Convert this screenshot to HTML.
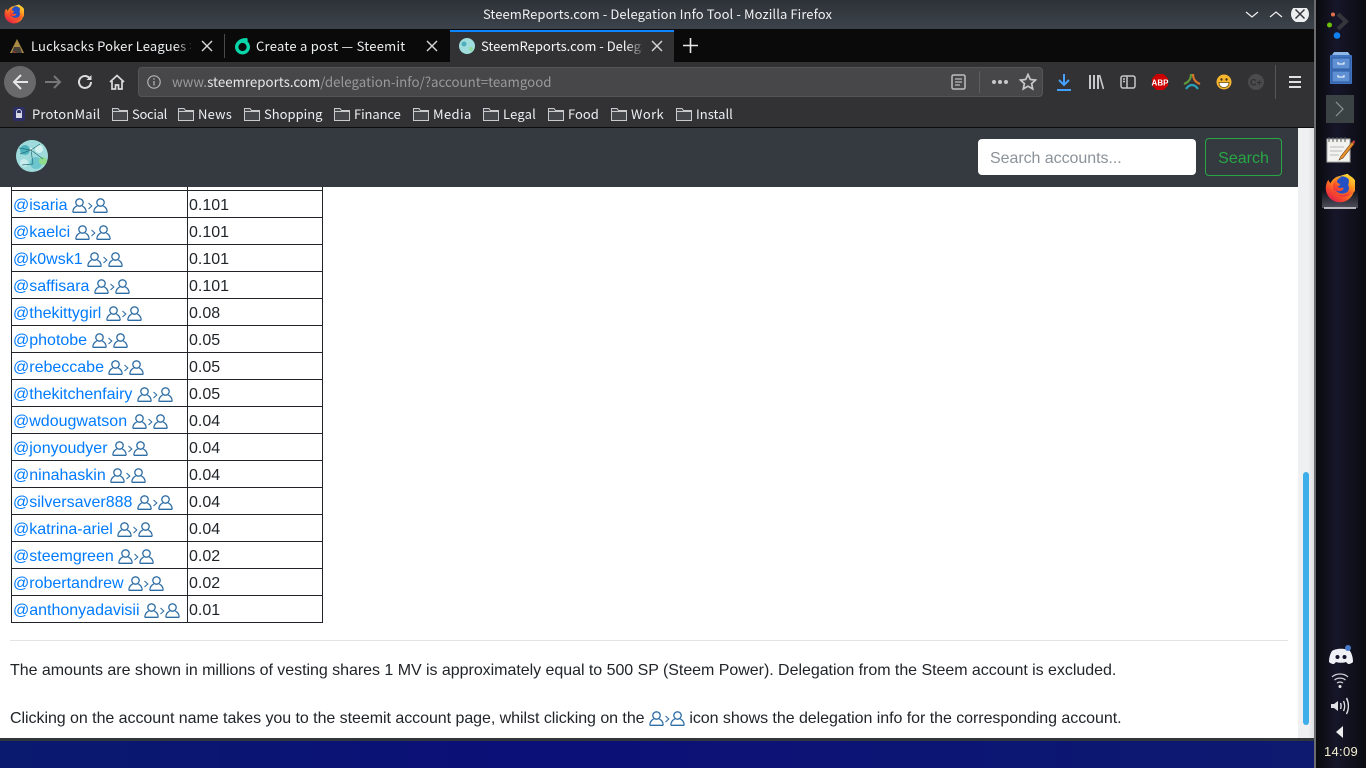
<!DOCTYPE html>
<html><head><meta charset="utf-8"><title>SteemReports.com - Delegation Info Tool</title>
<style>
html,body{margin:0;padding:0;width:1366px;height:768px;overflow:hidden;background:#0b1272;font-family:"Liberation Sans",sans-serif;}
.a{position:absolute;white-space:nowrap;}
.ui{font-family:"Noto Sans CJK JP","Liberation Sans",sans-serif;font-size:13px;color:#eceff1;line-height:18px;}
svg{display:block;}
table{position:absolute;left:11px;top:163px;border-collapse:collapse;width:312px;table-layout:fixed;font-size:16px;color:#212529;}
td{border:1px solid #212529;height:22px;padding:4px 1px 0;line-height:22px;white-space:nowrap;overflow:hidden;}
td a{color:#007bff;text-decoration:none;}
td svg,p svg{display:inline-block;vertical-align:-3px;}
.fade{background:linear-gradient(90deg,rgba(10,10,10,0),#0a0a0a);}
</style></head><body>
<svg width="0" height="0" style="position:absolute"><defs>
<linearGradient id="fg" x1="0.85" y1="0.05" x2="0.2" y2="0.95"><stop offset="0" stop-color="#ffe03a"/><stop offset=".4" stop-color="#ff9a1f"/><stop offset=".75" stop-color="#f6472c"/><stop offset="1" stop-color="#e0204f"/></linearGradient>
<symbol id="pp" viewBox="0 0 36 15"><g fill="none" stroke="#2f6ea5" stroke-width="1.3"><circle cx="7.5" cy="4.5" r="3.7"/><path d="M.8 14.3c0-3.6 2.2-5.6 3.9-6.2M14.2 14.3c0-3.6-2.2-5.6-3.9-6.2M.8 14.3h13.4"/><path d="M16.5 5l3.3 3-3.3 3" stroke-width="1.1"/><circle cx="28.5" cy="4.5" r="3.7"/><path d="M21.8 14.3c0-3.6 2.2-5.6 3.9-6.2M35.200 14.300c0-3.600-2.200-5.600-3.900-6.200M21.800 14.300h13.400"/></g></symbol>
<symbol id="fd" viewBox="0 0 16 14"><path d="M.5 13.500V1.500h5.500l1.500 2h8v10z" fill="#45474a" stroke="#c8cacb"/><path d="M.5 4.500h15" stroke="#c8cacb"/></symbol>
<symbol id="ff" viewBox="0 0 40 40"><path d="M30 1c5 4 9 11 9 19 0 10.500-8.500 19-19 19S1 30.500 1 20c0-4 1.200-8 3.500-11 .5 2 1.500 3.500 3 4.500C9 10 12 7 16 5z" fill="url(#fg)"/><circle cx="23" cy="16" r="11.500" fill="#2450c4"/><path d="M29 2c3 4 3.500 9 2 14 2.500 5-.5 11-6 13-7 2-13-2-14-8 3 3.500 8 4.500 12 2 2-1.500 2-3 1-3.500-3 1-6 .5-7.500-1.500 2.500-.5 4-2 3.500-3.500-2-.5-4-1.500-4-3 0-3 3.500-5 6-6.500-3 .2-7 1.200-9 4.500-2 2.800-3 8-1 13 2 5 7 9 14 9 9 0 16-7 16-15 0-6-4-11-13-15z" fill="url(#fg)"/></symbol>
</defs></svg>

<!-- title bar -->
<div class="a" style="left:0;top:0;width:1315px;height:29px;background:linear-gradient(#2d3237,#3d434b)"></div>
<svg class="a" style="left:4px;top:4px" width="20" height="20"><use href="#ff"/></svg>
<div class="a ui" style="left:0;width:1315px;top:5px;text-align:center;color:#eff0f1;letter-spacing:.09px">SteemReports.com - Delegation Info Tool - Mozilla Firefox</div>
<svg class="a" style="left:1244px;top:8px" width="68" height="14" fill="none" stroke="#eff0f1" stroke-width="1.200"><path d="M2 4l6 5 6-5M26 9l6-5 6 5"/><circle cx="56" cy="6" r="9" fill="#eceef0" stroke="none"/><path d="M51.500 1.500l9 9m0-9l-9 9" stroke="#31363b" stroke-width="1.500"/></svg>

<!-- tab bar -->
<div class="a" style="left:0;top:29px;width:1315px;height:33px;background:#0a0a0a"></div>
<div class="a" style="left:450px;top:30px;width:224px;height:32px;background:#323234;border-top:2px solid #0a84ff;box-sizing:border-box"></div>
<div class="a" style="left:224px;top:34px;width:1px;height:24px;background:#4a4a4c"></div>
<svg class="a" style="left:9px;top:38px" width="16" height="16"><path d="M8 1L1 15h14z" fill="#a88a45"/><path d="M5 9h6l2 6H3z" fill="#45403a"/><path d="M4 13l1 2h3z" fill="#a83a30"/></svg>
<div class="a ui" style="left:31px;top:37px;width:160px;overflow:hidden;letter-spacing:.13px">Lucksacks Poker Leagues &gt;</div>
<div class="a fade" style="left:175px;top:36px;width:20px;height:20px"></div>
<svg class="a" style="left:201px;top:40px" width="12" height="12" stroke="#d8d8d8" stroke-width="1.400"><path d="M1 1l10 10m0-10L1 11"/></svg>
<svg class="a" style="left:234px;top:37px" width="17" height="18" fill="none"><circle cx="8.500" cy="10" r="5.800" stroke="#06d6a9" stroke-width="3.400"/><path d="M2 8C3 3 7 1 13 1c1 1.500 1 3 0 4-3-.5-6 0-8 3z" fill="#06d6a9"/></svg>
<div class="a ui" style="left:256px;top:37px;letter-spacing:.26px">Create a post — Steemit</div>
<svg class="a" style="left:426px;top:40px" width="12" height="12" stroke="#d8d8d8" stroke-width="1.400"><path d="M1 1l10 10m0-10L1 11"/></svg>
<svg class="a" style="left:459px;top:38px" width="16" height="16"><circle cx="8" cy="8" r="8" fill="#9fdcdc"/><circle cx="5" cy="6" r="2.500" fill="#4faebc"/><circle cx="12" cy="11" r="2" fill="#8fdc9c"/></svg>
<div class="a ui" style="left:481px;top:37px;width:161px;overflow:hidden;color:#f5f5f5">SteemReports.com - Delegation</div>
<div class="a" style="left:626px;top:36px;width:20px;height:20px;background:linear-gradient(90deg,rgba(50,50,52,0),#323234)"></div>
<svg class="a" style="left:651px;top:40px" width="12" height="12" stroke="#d8d8d8" stroke-width="1.400"><path d="M1 1l10 10m0-10L1 11"/></svg>
<svg class="a" style="left:683px;top:38px" width="15" height="15" stroke="#e8e8e8" stroke-width="1.600"><path d="M7.500 0v15M0 7.500h15"/></svg>

<!-- nav bar -->
<div class="a" style="left:0;top:62px;width:1315px;height:65px;background:#323234"></div>
<div class="a" style="left:0;top:127px;width:1315px;height:1px;background:#0c0c0d"></div>
<div class="a" style="left:4px;top:66px;width:32px;height:32px;border-radius:50%;background:#69696b"></div>
<svg class="a" style="left:12px;top:73px" width="18" height="18" fill="none" stroke="#e6e6e6" stroke-width="2"><path d="M2 9h14M9 2L2 9l7 7"/></svg>
<svg class="a" style="left:44px;top:74px" width="18" height="16" fill="none" stroke="#77777a" stroke-width="2"><path d="M1 8h15M10 2l6 6-6 6"/></svg>
<svg class="a" style="left:77px;top:74px" width="16" height="16" fill="none" stroke="#dcdcdc" stroke-width="2"><path d="M14 8a6 6 0 1 1-2-4.500L14 5"/><path d="M14.500 1v5h-5" fill="#dcdcdc" stroke="none"/></svg>
<svg class="a" style="left:109px;top:74px" width="16" height="16" fill="none" stroke="#dcdcdc" stroke-width="1.700"><path d="M1 8l7-6.500L15 8M3 7v8h3.500v-4h3v4H13V7"/></svg>
<div class="a" style="left:138px;top:67px;width:905px;height:30px;box-sizing:border-box;background:#474749;border:1px solid #565658;border-radius:4px"></div>
<svg class="a" style="left:147px;top:75px" width="14" height="14" fill="none" stroke="#b4b4b6" stroke-width="1.200"><circle cx="7" cy="7" r="6.200"/><path d="M7 6v4.500M7 3.300v1.400"/></svg>
<div class="a ui" style="left:172px;top:73px;color:#9a9a9c;font-size:13.300px"><span>www.</span><span style="color:#e8e8e8">steemreports.com</span>/delegation-info/?account=teamgood</div>
<svg class="a" style="left:951px;top:74px" width="15" height="16" fill="none" stroke="#bdbdbf" stroke-width="1.500"><rect x="1" y="1" width="13" height="14" rx="1.500"/><path d="M4 5h7M4 8h7M4 11h5" stroke-width="1.200"/></svg>
<div class="a" style="left:979px;top:71px;width:1px;height:22px;background:#5e5e60"></div>
<svg class="a" style="left:991px;top:79px" width="18" height="6" fill="#c8c8ca"><circle cx="3" cy="3" r="2"/><circle cx="9" cy="3" r="2"/><circle cx="15" cy="3" r="2"/></svg>
<svg class="a" style="left:1019px;top:73px" width="18" height="18" fill="none" stroke="#c8c8ca" stroke-width="1.700"><path d="M9 1.500l2.300 5 5.200.6-3.900 3.500 1.100 5.300L9 13.200l-4.700 2.700 1.100-5.300L1.500 7.100l5.200-.6z"/></svg>
<svg class="a" style="left:1057px;top:73px" width="14" height="18" fill="none" stroke="#45a1ff" stroke-width="2"><path d="M7 1v11M2 7l5 5 5-5M0 17h14"/></svg>
<svg class="a" style="left:1088px;top:74px" width="16" height="16" fill="none" stroke="#c8c8ca" stroke-width="2"><path d="M2 1v14M6 1v14M10 1v14" /><path d="M11.500 1l4 14" stroke-width="1.600"/></svg>
<svg class="a" style="left:1120px;top:75px" width="16" height="14" fill="none" stroke="#c8c8ca" stroke-width="1.500"><rect x="1" y="1" width="14" height="12" rx="2"/><path d="M7 1v12M3 4h2M3 6.500h2"/></svg>
<svg class="a" style="left:1151px;top:73px" width="18" height="18"><path d="M5.500 1h7L17 5.500v7L12.500 17h-7L1 12.500v-7z" fill="#c00"/><text x="9" y="12.300" text-anchor="middle" font-family="Liberation Sans" font-weight="bold" font-size="8" fill="#fff">ABP</text></svg>
<svg class="a" style="left:1183px;top:73px" width="18" height="18" fill="none" stroke-width="2.200"><path d="M8 1C8 6 6 9 1 11" stroke="#5f9b3a"/><path d="M10 1c0 5 2 8 7 10" stroke="#d8732a"/><path d="M3 16c2-3 4-4 6-4s4 1 6 4" stroke="#2aa0b8"/></svg>
<svg class="a" style="left:1216px;top:74px" width="16" height="16"><circle cx="8" cy="8" r="7.500" fill="#f5b62e"/><circle cx="5.500" cy="5.500" r="1.200" fill="#4a3410"/><circle cx="10.500" cy="5.500" r="1.200" fill="#4a3410"/><path d="M3 8.500h10c0 3-2 5-5 5s-5-2-5-5z" fill="#fff" stroke="#6b4a14" stroke-width=".8"/></svg>
<svg class="a" style="left:1248px;top:74px" width="16" height="16"><circle cx="8" cy="8" r="8" fill="#4b4b4d"/><text x="8" y="11.500" text-anchor="middle" font-family="Liberation Sans" font-weight="bold" font-size="9" fill="#2f2f31">C+</text></svg>
<div class="a" style="left:1275px;top:65px;width:1px;height:34px;background:#565658"></div>
<svg class="a" style="left:1289px;top:76px" width="12" height="12" fill="#e0e0e0"><rect y="0" width="12" height="2"/><rect y="5" width="12" height="2"/><rect y="10" width="12" height="2"/></svg>

<!-- bookmarks -->
<svg class="a" style="left:12px;top:106px" width="14" height="16"><rect x="1" y="1" width="12" height="14" rx="2" fill="#2b2f66"/><circle cx="7" cy="6" r="2.500" fill="none" stroke="#d8d8e4"/><rect x="4" y="7" width="6" height="5" fill="#d8d8e4"/></svg>
<div class="a ui" style="left:32px;top:105px;letter-spacing:.2px">ProtonMail</div>
<svg class="a" style="left:112px;top:107px" width="16" height="14"><use href="#fd"/></svg><div class="a ui" style="left:132px;top:105px;letter-spacing:-.3px">Social</div>
<svg class="a" style="left:178px;top:107px" width="16" height="14"><use href="#fd"/></svg><div class="a ui" style="left:198px;top:105px;letter-spacing:.2px">News</div>
<svg class="a" style="left:244px;top:107px" width="16" height="14"><use href="#fd"/></svg><div class="a ui" style="left:264px;top:105px">Shopping</div>
<svg class="a" style="left:334px;top:107px" width="16" height="14"><use href="#fd"/></svg><div class="a ui" style="left:354px;top:105px;letter-spacing:-.1px">Finance</div>
<svg class="a" style="left:413px;top:107px" width="16" height="14"><use href="#fd"/></svg><div class="a ui" style="left:433px;top:105px;letter-spacing:.4px">Media</div>
<svg class="a" style="left:483px;top:107px" width="16" height="14"><use href="#fd"/></svg><div class="a ui" style="left:503px;top:105px;letter-spacing:.2px">Legal</div>
<svg class="a" style="left:548px;top:107px" width="16" height="14"><use href="#fd"/></svg><div class="a ui" style="left:568px;top:105px">Food</div>
<svg class="a" style="left:611px;top:107px" width="16" height="14"><use href="#fd"/></svg><div class="a ui" style="left:631px;top:105px;letter-spacing:.4px">Work</div>
<svg class="a" style="left:676px;top:107px" width="16" height="14"><use href="#fd"/></svg><div class="a ui" style="left:696px;top:105px">Install</div>

<!-- page -->
<div class="a" style="left:0;top:128px;width:1298px;height:610px;background:#fff;overflow:hidden">
<table style="top:35px"><colgroup><col style="width:176px"><col style="width:135px"></colgroup>
<tr><td></td><td></td></tr>
<tr><td><a>@isaria</a> <svg width="36" height="15"><use href="#pp"/></svg></td><td>0.101</td></tr>
<tr><td><a>@kaelci</a> <svg width="36" height="15"><use href="#pp"/></svg></td><td>0.101</td></tr>
<tr><td><a>@k0wsk1</a> <svg width="36" height="15"><use href="#pp"/></svg></td><td>0.101</td></tr>
<tr><td><a>@saffisara</a> <svg width="36" height="15"><use href="#pp"/></svg></td><td>0.101</td></tr>
<tr><td><a>@thekittygirl</a> <svg width="36" height="15"><use href="#pp"/></svg></td><td>0.08</td></tr>
<tr><td><a>@photobe</a> <svg width="36" height="15"><use href="#pp"/></svg></td><td>0.05</td></tr>
<tr><td><a>@rebeccabe</a> <svg width="36" height="15"><use href="#pp"/></svg></td><td>0.05</td></tr>
<tr><td><a>@thekitchenfairy</a> <svg width="36" height="15"><use href="#pp"/></svg></td><td>0.05</td></tr>
<tr><td><a>@wdougwatson</a> <svg width="36" height="15"><use href="#pp"/></svg></td><td>0.04</td></tr>
<tr><td><a>@jonyoudyer</a> <svg width="36" height="15"><use href="#pp"/></svg></td><td>0.04</td></tr>
<tr><td><a>@ninahaskin</a> <svg width="36" height="15"><use href="#pp"/></svg></td><td>0.04</td></tr>
<tr><td><a>@silversaver888</a> <svg width="36" height="15"><use href="#pp"/></svg></td><td>0.04</td></tr>
<tr><td><a>@katrina-ariel</a> <svg width="36" height="15"><use href="#pp"/></svg></td><td>0.04</td></tr>
<tr><td><a>@steemgreen</a> <svg width="36" height="15"><use href="#pp"/></svg></td><td>0.02</td></tr>
<tr><td><a>@robertandrew</a> <svg width="36" height="15"><use href="#pp"/></svg></td><td>0.02</td></tr>
<tr><td><a>@anthonyadavisii</a> <svg width="36" height="15"><use href="#pp"/></svg></td><td>0.01</td></tr>
</table>
<div class="a" style="left:10px;top:512px;width:1278px;height:1px;background:#e2e3e4"></div>
<p class="a" style="left:10px;top:531px;margin:0;font-size:16px;line-height:24px;color:#212529;letter-spacing:-.034px">The amounts are shown in millions of vesting shares 1 MV is approximately equal to 500 SP (Steem Power). Delegation from the Steem account is excluded.</p>
<p class="a" style="left:10px;top:579px;margin:0;font-size:16px;line-height:24px;color:#212529;letter-spacing:-.045px">Clicking on the account name takes you to the steemit account page, whilst clicking on the <svg width="36" height="15"><use href="#pp"/></svg> icon shows the delegation info for the corresponding account.</p>
<div class="a" style="left:0;top:0;width:1298px;height:59px;background:#343a40"></div>
<svg class="a" style="left:16px;top:12px" width="32" height="32"><circle cx="16" cy="16" r="16" fill="#9fdbdc"/><circle cx="9" cy="10" r="5" fill="#4eb2bf"/><circle cx="20" cy="23" r="6" fill="#6cc4cc"/><circle cx="8" cy="23" r="4" fill="#c8ecec"/><circle cx="23" cy="9" r="4" fill="#d2f0ee"/><circle cx="27" cy="21" r="4" fill="#8fdc8c"/><circle cx="15" cy="10" r="1.800" fill="#fff"/><path d="M4 14L15 10l12 9M15 10l2 14M6 25l11-1M15 10l9-6M3 8l12 2" stroke="#1f6f78" stroke-width=".7" fill="none"/></svg>
<div class="a" style="left:978px;top:11px;width:218px;height:36px;background:#fff;border-radius:4px;box-sizing:border-box;padding:6px 12px;font-size:16px;line-height:28px;color:#8b9299;letter-spacing:-.05px">Search accounts...</div>
<div class="a" style="left:1205px;top:10px;width:77px;height:38px;box-sizing:border-box;border:1px solid #28a745;border-radius:4px;color:#28a745;font-size:16px;line-height:40px;text-align:center">Search</div>
</div>
<!-- scrollbar -->
<div class="a" style="left:1298px;top:128px;width:17px;height:610px;background:linear-gradient(90deg,#eff0f1 60%,#dcdddf)"></div>
<div class="a" style="left:1303px;top:472px;width:6px;height:253px;border-radius:3px;background:#3daee9"></div>
<div class="a" style="left:0;top:738px;width:1315px;height:3px;background:#31363b"></div>
<div class="a" style="left:0;top:741px;width:1315px;height:27px;background:linear-gradient(90deg,#0a1a6e,#0b0f78 40%,#0d1a70)"></div>

<!-- side panel -->
<div class="a" style="left:1314px;top:0;width:2px;height:768px;background:#6a6c70"></div>
<div class="a" style="left:1316px;top:0;width:50px;height:768px;background:linear-gradient(90deg,#0a0a0e,#16162a 40%,#0c0c12)"></div>
<svg class="a" style="left:1326px;top:10px" width="30" height="32"><circle cx="7" cy="4.500" r="2" fill="#e0704a"/><circle cx="3.500" cy="15" r="2.500" fill="#6cbf0a"/><circle cx="11" cy="25.500" r="3.300" fill="#0f82f2"/><path d="M12 4l8 7.500L12 19" fill="none" stroke="#33363a" stroke-width="4"/></svg>
<svg class="a" style="left:1329px;top:52px" width="24" height="32"><path d="M3 3l2-3h14l2 3z" fill="#8fb8e8"/><rect x="1" y="3" width="22" height="29" rx="1" fill="#3f73c0"/><rect x="3" y="6" width="18" height="11" fill="#5f90d4" stroke="#2f5aa0"/><rect x="3" y="19" width="18" height="11" fill="#5f90d4" stroke="#2f5aa0"/><path d="M9 10v2h6v-2M9 23v2h6v-2" stroke="#fff" fill="none"/></svg>
<div class="a" style="left:1326px;top:95px;width:28px;height:28px;background:#3a4244"></div>
<svg class="a" style="left:1333px;top:101px" width="14" height="16" fill="none" stroke="#8d9496" stroke-width="1.200"><path d="M3 1l7 7-7 7"/></svg>
<svg class="a" style="left:1326px;top:136px" width="30" height="28"><rect x="1" y="3" width="23" height="23" fill="#f2f2ee" stroke="#aaa"/><path d="M3 1v5M7 1v5M11 1v5M15 1v5M19 1v5" stroke="#555"/><path d="M4 11h14M4 15h12M4 19h9" stroke="#bbb"/><path d="M26 6L15 20l-2 4 4-2L28 8z" fill="#e8902e" stroke="#6b3d10" stroke-width=".6"/><path d="M26 6l2 2 1-2-1-2z" fill="#c84040"/></svg>
<div class="a" style="left:1322px;top:190px;width:36px;height:18px;background:linear-gradient(rgba(130,130,140,0),rgba(130,130,140,.55))"></div>
<svg class="a" style="left:1325px;top:173px" width="30" height="30"><use href="#ff"/></svg>
<div class="a" style="left:1324px;top:207px;width:32px;height:2px;background:#b4b4ba"></div>
<svg class="a" style="left:1329px;top:645px" width="24" height="20"><path d="M3 6c4-3 14-3 18 0 2 3 3 7 3 11-2 2-4 2-5 2l-2-2c-3 1-7 1-10 0l-2 2c-1 0-3 0-5-2 0-4 1-8 3-11z" fill="#eef0f6"/><circle cx="8.500" cy="12" r="2" fill="#14142a"/><circle cx="15.500" cy="12" r="2" fill="#14142a"/><circle cx="19" cy="3" r="3" fill="#4a78c8"/></svg>
<svg class="a" style="left:1331px;top:672px" width="18" height="17" fill="none" stroke="#d0d0d4" stroke-width="1.200"><path d="M1 5c4-4 12-4 16 0M3.500 8c3-2.500 8-2.500 11 0M6 11c2-1.300 4-1.300 6 0"/><circle cx="9" cy="14.500" r="1.500" fill="#e8e8ec" stroke="none"/></svg>
<svg class="a" style="left:1330px;top:696px" width="20" height="20" fill="none" stroke="#e0e0e4" stroke-width="1.400"><path d="M1 8h3l4-3v10l-4-3H1z" fill="#e0e0e4" stroke="none"/><path d="M10.500 7c.8 2 .8 4 0 6M13.500 5c1.500 3 1.500 7 0 10M16.500 2c2.500 5 2.500 11 0 16"/></svg>
<svg class="a" style="left:1336px;top:726px" width="8" height="12"><path d="M7 0v12L0 6z" fill="#eee"/></svg>
<div class="a" style="left:1316px;top:744px;width:50px;text-align:center;font-size:13px;line-height:16px;color:#f4eecf;letter-spacing:.3px">14:09</div>
</body></html>
